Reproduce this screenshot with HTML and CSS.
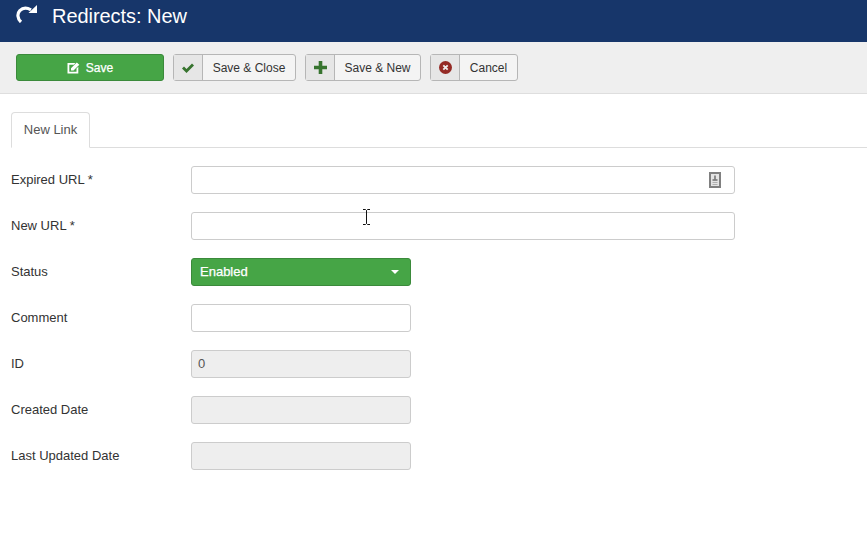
FILE: index.html
```html
<!DOCTYPE html>
<html lang="en">
<head>
<meta charset="utf-8">
<title>Redirects: New</title>
<link rel="stylesheet" href="styles.css">
</head>
<body>
<header class="title-bar">
  <svg class="title-icon" width="22" height="20" viewBox="0 0 22 20"><path d="M5 19 C1.3 15.5 1 10.5 3.8 7.6 C7 4.4 11 4.6 15 6.8" fill="none" stroke="#fff" stroke-width="3.2"/><path d="M21 2 V10 H12.5 Z" fill="#fff"/></svg>
  <h1 class="title">Redirects: New</h1>
</header>
<div class="toolbar">
  <button class="btn btn-save"><svg width="13" height="12" viewBox="0 0 13 12"><path d="M0.5 1 H8.5 L6.8 2.7 H2.3 V9.7 H9.5 V6.5 L11.3 4.8 V11.5 H0.5 Z" fill="#fff"/><path d="M4 6.2 L9.8 0.5 L12.3 2.8 L6.5 8.6 H4 Z" fill="#fff"/></svg>Save</button>
  <button class="btn btn-split btn-close"><span class="btn-icon"><svg width="14" height="12" viewBox="0 0 14 12"><path d="M1 6.5 L3 4.5 L5.5 7 L11 1.5 L13 3.5 L5.5 11 Z" fill="#37742f"/></svg></span><span class="btn-label">Save &amp; Close</span></button>
  <button class="btn btn-split btn-new"><span class="btn-icon"><svg width="13" height="13" viewBox="0 0 13 13"><path d="M4.7 0 H8.3 V4.7 H13 V8.3 H8.3 V13 H4.7 V8.3 H0 V4.7 H4.7 Z" fill="#37742f"/></svg></span><span class="btn-label">Save &amp; New</span></button>
  <button class="btn btn-split btn-cancel"><span class="btn-icon"><svg width="13" height="13" viewBox="0 0 13 13"><circle cx="6.5" cy="6.5" r="6.5" fill="#942a25"/><path d="M4.3 4.3 L8.7 8.7 M8.7 4.3 L4.3 8.7" stroke="#eee" stroke-width="1.8"/></svg></span><span class="btn-label">Cancel</span></button>
</div>
<main class="content">
  <nav class="tabs"><span class="tab">New Link</span></nav>
  <form class="form">
    <div class="row"><label class="label">Expired URL *</label>
      <div class="input input-wide input-icon"><svg width="12" height="16" viewBox="0 0 12 16"><rect x="1" y="1" width="10" height="14" fill="#e4e4e4" stroke="#808080" stroke-width="2"/><path d="M6 3.5 V7.5" stroke="#666" stroke-width="1.4"/><path d="M3.5 8 H8.5" stroke="#666" stroke-width="1.4"/><path d="M3.5 10.5 H8.5 M3.5 12.5 H8.5" stroke="#b0b0b0"/></svg></div></div>
    <div class="row"><label class="label">New URL *</label><div class="input input-wide"></div></div>
    <div class="row"><label class="label">Status</label><div class="input select">Enabled<span class="caret"></span></div></div>
    <div class="row"><label class="label">Comment</label><div class="input"></div></div>
    <div class="row"><label class="label">ID</label><div class="input disabled">0</div></div>
    <div class="row"><label class="label">Created Date</label><div class="input disabled"></div></div>
    <div class="row"><label class="label">Last Updated Date</label><div class="input disabled"></div></div>
  </form>
</main>
<svg class="cursor" width="7" height="16" viewBox="0 0 7 16"><path d="M0 0.5 H2.5 L3.5 1.5 L4.5 0.5 H7 M3.5 1.5 V14.5 M0 15.5 H2.5 L3.5 14.5 L4.5 15.5 H7" fill="none" stroke="#111" stroke-width="1"/></svg>
</body>
</html>
```
FILE: styles.css
```css
* { box-sizing: border-box; }
html, body { margin: 0; height: 100%; overflow: hidden; }
body { background: #fff; color: #333; font-family: "Liberation Sans", Arial, sans-serif; font-size: 13px; position: relative; }

.title-bar { height: 42px; background: #17366a; display: flex; align-items: flex-start; padding: 3px 0 0 16px; color: #fff; }
.title-icon { display: block; margin-right: 14px; }
.title { margin: 2px 0 0; font-size: 20px; font-weight: 400; line-height: 22px; letter-spacing: -0.05px; }

.toolbar { height: 52px; background: #efefef; border-bottom: 1px solid #dedede; display: flex; align-items: flex-start; gap: 9px; padding: 12px 0 0 16px; }
.btn { height: 27px; padding: 0; border-radius: 3px; font: 12px "Liberation Sans", Arial, sans-serif; display: flex; align-items: center; color: #333; }
.btn-save { width: 148px; justify-content: center; gap: 6px; background: #46a546; border: 1px solid #3b8a3b; color: #fff; -webkit-text-stroke: 0.25px #fff; }
.btn-split { background: #f4f4f4; border: 1px solid #b6b6b6; }
.btn-icon { width: 29px; height: 100%; background: #e6e6e6; border-right: 1px solid #b6b6b6; display: flex; align-items: center; justify-content: center; }
.btn-label { flex: 1; text-align: center; }
.btn-close { width: 123px; }
.btn-new { width: 116px; }
.btn-cancel { width: 88px; }

.content { padding: 18px 0 0 11px; }
.tabs { height: 36px; border-bottom: 1px solid #ddd; }
.tab { display: flex; align-items: center; justify-content: center; width: 79px; height: 36px; padding-bottom: 2px; background: #fff; border: 1px solid #ddd; border-bottom-color: #fff; border-radius: 4px 4px 0 0; color: #555; }

.form { padding-top: 18px; display: flex; flex-direction: column; gap: 18px; }
.row { display: flex; align-items: flex-start; height: 28px; }
.label { width: 180px; line-height: 27px; }
.input { width: 220px; height: 28px; background: #fff; border: 1px solid #ccc; border-radius: 3px; padding: 0 8px; line-height: 26px; display: flex; align-items: center; font-size: 13px; }
.input-wide { width: 544px; }
.input-icon { justify-content: flex-end; padding-right: 13px; }
.select { background: #46a546; border-color: #3b8a3b; color: #fff; -webkit-text-stroke: 0.25px #fff; justify-content: space-between; padding-right: 11px; }
.caret { width: 0; height: 0; border-left: 4.5px solid transparent; border-right: 4.5px solid transparent; border-top: 4.5px solid #fff; }
.disabled { background: #eee; color: #555; padding-left: 6px; }

.cursor { position: absolute; left: 363px; top: 209px; }
```
